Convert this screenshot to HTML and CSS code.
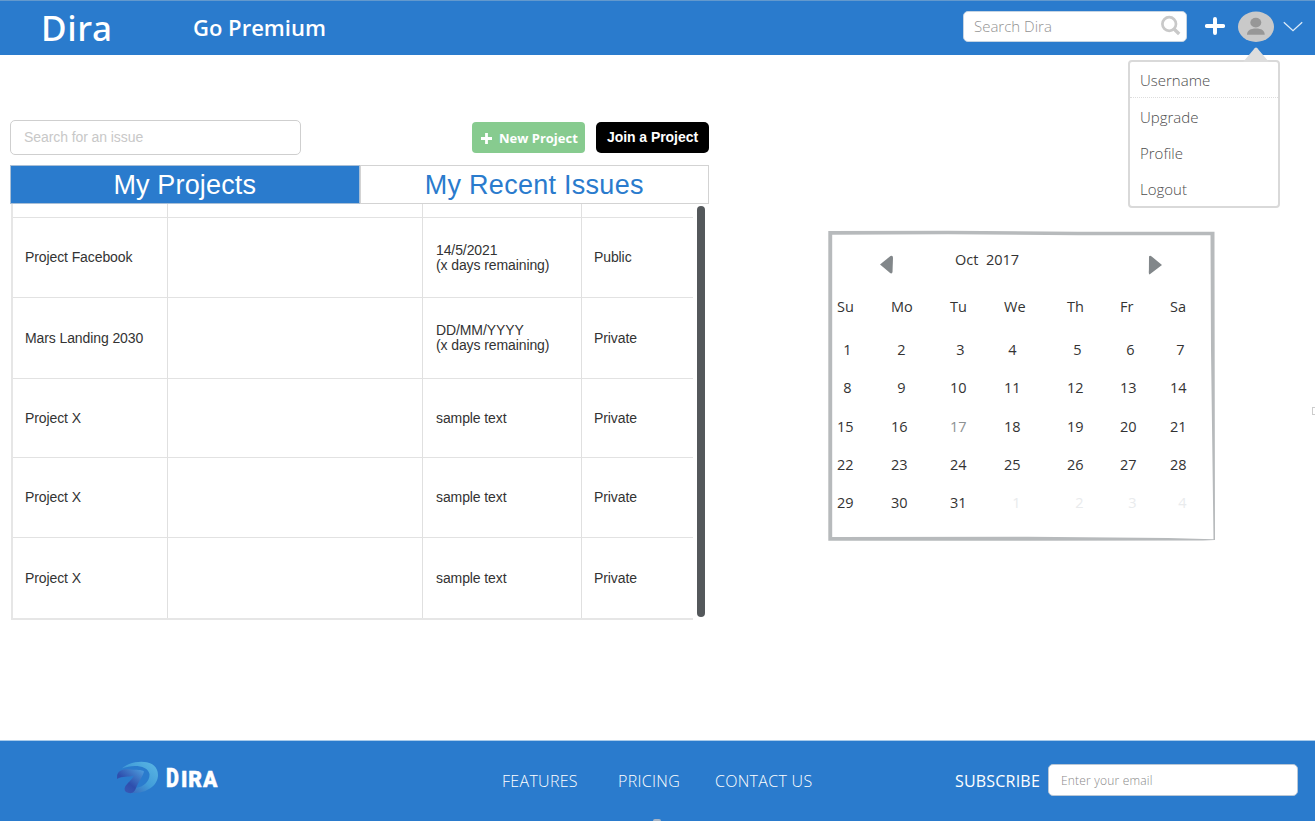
FILE: index.html
```html
<!DOCTYPE html>
<html lang="en">
<head>
<meta charset="utf-8">
<title>Dira</title>
<link rel="stylesheet" href="styles.css">
</head>
<body>
<header class="topbar">
  <div class="brand"><span>Dira</span></div>
  <nav class="premium"><span>Go Premium</span></nav>
  <div class="search"><span>Search Dira</span>
    <svg class="search-icon" width="22" height="22" viewBox="0 0 22 22"><circle cx="10.200" cy="9" r="6.800" fill="none" stroke="#c9c9c9" stroke-width="2.700"/><path d="M15 14L20.200 19" stroke="#c9c9c9" stroke-width="3.400"/></svg>
  </div>
  <svg class="plus" width="20" height="20" viewBox="0 0 20 20"><path d="M10 2.200V17.800M1 10H19" stroke="#fff" stroke-width="4.400" stroke-linecap="round" transform="translate(1 1) scale(.9)"/></svg>
  <svg class="avatar" width="36" height="31" viewBox="0 0 36 31"><ellipse cx="18" cy="15.800" rx="18" ry="15.200" fill="#c9c9c9"/><ellipse cx="17.800" cy="11.600" rx="5.500" ry="4.900" fill="#979797"/><path d="M9 23.800C9 19.500 12.500 17.500 18 17.500s8.700 2 8.700 6.300z" fill="#979797"/></svg>
  <svg class="chevron" width="20" height="12" viewBox="0 0 20 12"><path d="M.8 1.200L10 9.700L19.200 1.200" fill="none" stroke="#dcebf8" stroke-width="1.300"/></svg>
  <div class="menu">
    <svg class="menu-arrow" width="26" height="15" viewBox="0 0 26 15"><path d="M0 15L11.700 1.200Q13 0 14.300 1.200L26 15z" fill="#ddd"/></svg>
    <a class="first">Username</a><a>Upgrade</a><a>Profile</a><a>Logout</a>
  </div>
</header>
<main class="content">
  <section class="projects">
    <div class="toolbar">
      <div class="issue-search">Search for an issue</div>
      <div class="btn green"><svg width="11" height="11" viewBox="0 0 11 11"><path d="M5.500 0V11M0 5.500H11" stroke="#fff" stroke-width="2.800"/></svg><span>New Project</span></div>
      <div class="btn black"><span>Join a Project</span></div>
    </div>
    <div class="tabs"><div class="tab active"><span>My Projects</span></div><div class="tab recent"><span>My Recent Issues</span></div></div>
    <div class="scroller">
      <div class="table">
        <div class="row stub"><div></div><div></div><div></div><div></div></div>
        <div class="row"><div>Project Facebook</div><div></div><div>14/5/2021<br>(x days remaining)</div><div>Public</div></div>
        <div class="row tall"><div>Mars Landing 2030</div><div></div><div class="date">DD/MM/YYYY<br>(x days remaining)</div><div>Private</div></div>
        <div class="row short"><div>Project X</div><div></div><div>sample text</div><div>Private</div></div>
        <div class="row"><div>Project X</div><div></div><div>sample text</div><div>Private</div></div>
        <div class="row"><div>Project X</div><div></div><div>sample text</div><div>Private</div></div>
      </div>
      <div class="thumb"></div>
    </div>
  </section>
  <section class="calendar">
    <svg class="frame" width="390" height="312" viewBox="0 0 390 312"><path fill-rule="evenodd" fill="#b7babc" d="M.3 .9L120 .7L250 1.700L386.500 1.700L386.500 20L387 310L375 310.500L200 310.800L.3 310.800zM4.200 4.700L120 4.300L250 5.300L382.500 5.300L383 120L385.500 309.300L340 308L200 306.700L4.200 307z"/></svg>
    <div class="cal-head">
      <svg width="14" height="20" viewBox="0 0 14 20"><path d="M0 9.500L10.500 1Q13 0 13 3L12.500 17Q12 19.500 9.500 17.500z" fill="#82878a"/></svg>
      <span>Oct&nbsp; 2017</span>
      <svg width="14" height="20" viewBox="0 0 14 20"><path d="M1 1.500Q2 0 4 1.800L14 10L1.500 19.500Q.5 19 .9 15z" fill="#82878a"/></svg>
    </div>
    <div class="week days"><b>Su</b><b>Mo</b><b>Tu</b><b>We</b><b>Th</b><b>Fr</b><b>Sa</b></div>
    <div class="week single"><b>1</b><b>2</b><b>3</b><b>4</b><b>5</b><b>6</b><b>7</b></div>
    <div class="week"><b class="one">8</b><b class="one">9</b><b>10</b><b>11</b><b>12</b><b>13</b><b>14</b></div>
    <div class="week"><b>15</b><b>16</b><b class="today">17</b><b>18</b><b>19</b><b>20</b><b>21</b></div>
    <div class="week"><b>22</b><b>23</b><b>24</b><b>25</b><b>26</b><b>27</b><b>28</b></div>
    <div class="week"><b>29</b><b>30</b><b>31</b><b class="next">1</b><b class="next">2</b><b class="next">3</b><b class="next">4</b></div>
  </section>
  <i class="edge-mark"></i>
</main>
<footer class="footer">
  <div class="logo">
    <svg width="44" height="34" viewBox="0 0 44 34">
      <defs><linearGradient id="bowl" x1="0" y1="1" x2="1" y2="0"><stop offset="0" stop-color="#3158b4"/><stop offset=".5" stop-color="#429dd9"/><stop offset="1" stop-color="#5cb8e4"/></linearGradient><linearGradient id="stem" x1="0" y1="1" x2=".9" y2="0"><stop offset="0" stop-color="#3c5fbb"/><stop offset=".45" stop-color="#2e4ead"/><stop offset="1" stop-color="#4c9adb"/></linearGradient></defs>
      <path d="M6 7.500C14-1 42-4 42 14C42 26 28 33 15 32L20 27C28 26 34 20 33.500 13C32 4 16 3 6 7.500z" fill="url(#bowl)"/>
      <path d="M1 16C1 9 8 7.500 15 8.500C20 9 26 8.500 28 10.500C27 15 22.500 21 20 27Q18 33 13 32Q7 31 9 26C11 22 16 19 18 14.500C13 16.500 6 14.500 1 18z" fill="url(#stem)"/>
    </svg>
    <span><big>D</big>IRA</span>
  </div>
  <nav class="links"><a class="l1">FEATURES</a><a class="l2">PRICING</a><a class="l3">CONTACT US</a></nav>
  <div class="subscribe"><span>SUBSCRIBE</span><div class="email">Enter your email</div></div>
  <i class="bottom-mark"></i>
</footer>
</body>
</html>
```
FILE: styles.css
```css
* { box-sizing: border-box; }
body { margin: 0; height: 821px; display: flex; flex-direction: column; overflow: hidden; background: #fff; font-family: "Liberation Sans", Arial, sans-serif; color: #333; white-space: nowrap; }
svg { display: block; flex: none; }

.topbar { position: relative; height: 55px; flex: none; display: flex; background: #2a7bcd; border-top: 1px solid #6399cd; font-family: "Open Sans", sans-serif; color: #fff; }
.brand { width: 193px; padding-left: 41px; font: 500 35px/54px "Noto Sans", sans-serif; letter-spacing: .6px; }
.premium { width: 770px; font: 600 22px/53px "Open Sans", sans-serif; }
.search { width: 224px; height: 31px; margin-top: 10px; padding: 0 5px 2px 10px; display: flex; justify-content: space-between; align-items: center; background: #fff; border: 1px solid #c5d4e3; border-radius: 5px; font-weight: 300; font-size: 15px; color: #929292; }
.plus { margin: 15px 0 0 18px; }
.avatar { margin: 10px 0 0 13px; }
.chevron { margin: 20px 0 0 9px; }
.menu { position: absolute; left: 1128px; top: 59px; width: 152px; height: 148px; border: 2px solid #d9d9d9; border-radius: 4px; background: #fff; color: #4c4c4c; font-weight: 300; font-size: 15px; }
.menu a { display: block; height: 36px; line-height: 39px; padding-left: 10px; }
.menu .first { border-bottom: 1px dotted #ddd; line-height: 36px; }
.menu-arrow { position: absolute; left: 113px; top: -15px; }

.content { position: relative; flex: 1; display: flex; align-items: flex-start; }
.projects { width: 828px; padding: 65px 0 0 10px; }
.toolbar { display: flex; align-items: flex-start; }
.issue-search { width: 291px; height: 35px; border: 1px solid #cfcfcf; border-radius: 5px; padding-left: 13px; font-size: 14px; letter-spacing: -.08px; line-height: 33px; color: #c8c8c8; }
.btn { margin-top: 2px; width: 113px; height: 31px; border-radius: 4px; display: flex; align-items: center; color: #fff; font-weight: 700; }
.green { margin-left: 171px; padding: 1px 0 0 9px; gap: 7px; background: #87cb8f; font: 700 13px "Open Sans", sans-serif; }
.black { margin-left: 11px; padding-bottom: 1px; justify-content: center; background: #000; border-radius: 5px; font-size: 14px; letter-spacing: -.05px; }
.tabs { display: flex; width: 699px; height: 39px; margin-top: 10px; }
.tab { flex: 1; border: 1px solid #d3d3d3; text-align: center; font-size: 27px; letter-spacing: .15px; line-height: 38px; color: #2a7bcd; }
.tab.active { background: #2a7bcd; border-color: #a9bfd6; color: #fff; }
.tab.recent { letter-spacing: .27px; }
.scroller { display: flex; height: 416px; }
.table { width: 682px; height: 416px; border-left: 2px solid #e6e6e6; border-bottom: 2px solid #e6e6e6; margin-left: 1px; }
.row { display: grid; grid-template-columns: 155px 255px 159px 1fr; height: 80px; font-size: 14px; letter-spacing: -.1px; line-height: 15px; }
.row > div { display: flex; align-items: center; padding-left: 12px; border-right: 1px solid #e0e0e0; border-bottom: 1px solid #e2e2e2; }
.row > div:nth-child(3) { padding-left: 13px; }
.row > div:last-child { border-right: 0; }
.row:last-child > div { border-bottom: 0; padding-top: 1px; }
.row.stub { height: 14px; }
.row.tall { height: 81px; }
.row.tall > div { padding-top: 1px; }
.row.tall > .date { padding: 0 0 1px 13px; }
.row.short { height: 79px; }
.row.short > div { padding-top: 1px; }
.thumb { width: 8px; height: 411px; margin: 2px 0 0 4px; border-radius: 4px; background: #54585b; }

.calendar { position: relative; width: 390px; height: 312px; margin-top: 176px; font: 400 14.500px/20px "Open Sans", "Noto Sans", sans-serif; color: #333; }
.frame { position: absolute; left: 0; top: -1px; }
.cal-head { display: flex; padding: 19px 0 0 52px; height: 66px; }
.cal-head svg { margin-top: 5px; }
.cal-head span { width: 193px; margin: 0 0 0 61px; }
.week { position: relative; display: grid; grid-template-columns: 54px 59px 54px 63px 53px 50px 50px; padding-left: 9px; height: 38.300px; }
.week b { font-weight: inherit; width: 16.500px; text-align: right; }
.days { height: 43px; }
.days b { text-align: left; }
.single b, .week .one { padding-right: 2px; }
.single b:nth-child(4) { padding-right: 4px; }
.week .today { color: #8d9193; }
.week .next { color: #e9ebed; }
.edge-mark { position: absolute; right: 0; top: 352px; width: 3px; height: 8px; border: 1px solid #ccc; border-right: 0; }

.footer { position: relative; height: 81px; flex: none; display: flex; background: #2a7bcd; border-top: 1px solid #a9cbea; color: #fff; font: 300 16px/24px "Open Sans", sans-serif; }
.logo { display: flex; width: 502px; padding: 20px 0 0 116px; gap: 6px; }
.logo span { font: 900 22px/38px Roboto, sans-serif; letter-spacing: .9px; -webkit-text-stroke: .4px #fff; transform: scaleX(.96); transform-origin: left; }
.logo big { font-size: 26px; line-height: 1; display: inline-block; transform: scaleX(.8); transform-origin: left; margin-right: -2px; }
.links { display: flex; width: 453px; padding-top: 28px; letter-spacing: .3px; }
.l1 { width: 116px; } .l2 { width: 97px; }
.subscribe { display: flex; padding-top: 23px; }
.subscribe span { width: 93px; font-weight: 400; padding-top: 5px; letter-spacing: .2px; }
.email { width: 250px; height: 32px; border: 1px solid #b9c7d6; border-radius: 5px; background: #fff; padding-left: 12px; font-size: 12px; letter-spacing: .2px; line-height: 31px; color: #888; }
.bottom-mark { position: absolute; left: 653px; bottom: 0; width: 8px; height: 2px; border-radius: 4px 4px 0 0; background: #a7b4c4; }
```
